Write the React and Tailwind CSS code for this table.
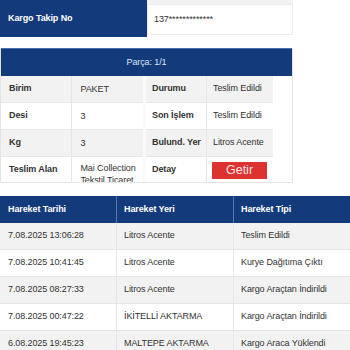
export default function App() {
  const rows = [
    ["7.08.2025 13:06:28", "Litros Acente", "Teslim Edildi"],
    ["7.08.2025 10:41:45", "Litros Acente", "Kurye Dağıtıma Çıktı"],
    ["7.08.2025 08:27:33", "Litros Acente", "Kargo Araçtan İndirildi"],
    ["7.08.2025 00:47:22", "İKİTELLİ AKTARMA", "Kargo Araçtan İndirildi"],
    ["6.08.2025 19:45:23", "MALTEPE AKTARMA", "Kargo Araca Yüklendi"],
  ];
  return (
    <div className="w-[350px] h-[350px] overflow-hidden bg-white text-[#333] text-[9px] tracking-[-0.1px]" style={{ fontFamily: '"Liberation Sans", Arial, sans-serif' }}>
      {/* Top */}
      <div className="flex h-[37px]">
        <div className="w-[147px] bg-[#133b7c] text-white font-bold flex items-center pl-[8px]">Kargo Takip No</div>
        <div className="w-[146px] flex flex-col">
          <div className="h-[4px] bg-[#f2f2f2]"></div>
          <div className="h-[31px] border border-[#ececec] bg-white flex items-center pl-[6px]">137*************</div>
        </div>
      </div>
      {/* Parca */}
      <div className="mt-[11px] w-[293px] h-[135px] overflow-hidden border border-[#e3e3e3] border-t-0">
        <div className="h-[28px] bg-[#133b7c] border-t border-[#4a6fb0] text-[#dde6f5] flex items-center justify-center">Parça: 1/1</div>
        <div className="flex">
          <div className="w-[145px] border-r-[3px] border-[#fafafa]">
            {[["Birim", "PAKET"], ["Desi", "3"], ["Kg", "3"], ["Teslim Alan", "Mai Collection Tekstil Ticaret Limited Şirketi"]].map((r, i) => (
              <div key={i} className={`flex ${i === 3 ? "h-[40px]" : "h-[27px]"} ${i % 2 === 0 ? "bg-[#f2f2f2]" : "bg-white"} border-b border-[#e6e6e6]`}>
                <div className={`w-[73px] border-r border-[#e6e6e6] font-bold pl-[8px] ${i === 3 ? "pt-[6px] leading-[12px]" : "flex items-center"}`}>{r[0]}</div>
                <div className={`w-[72px] pl-[8px] pr-[2px] leading-[12px] ${i === 3 ? "pt-[5px]" : "flex items-center"}`}>{r[1]}</div>
              </div>
            ))}
          </div>
          <div className="w-[127px]">
            {[["Durumu", "Teslim Edildi"], ["Son İşlem", "Teslim Edildi"], ["Bulund. Yer", "Litros Acente"], ["Detay", null]].map((r, i) => (
              <div key={i} className={`flex h-[27px] ${i % 2 === 0 ? "bg-[#f2f2f2]" : "bg-white"} border-b border-[#e6e6e6]`}>
                <div className="w-[61px] border-r border-[#e6e6e6] font-bold pl-[6px] flex items-center whitespace-nowrap">{r[0]}</div>
                <div className="w-[66px] pl-[6px] flex items-center whitespace-nowrap">
                  {r[1] ? r[1] : (
                    <div className="w-[55px] h-[17px] -ml-[1px] bg-[#dc3330] text-[#fbe3e2] text-[12.5px] tracking-normal flex items-center justify-center">Getir</div>
                  )}
                </div>
              </div>
            ))}
          </div>
        </div>
      </div>
      {/* Hareket */}
      <div className="mt-[13px] w-[350px]">
        <div className="grid grid-cols-[116px_117px_117px] h-[27px] bg-[#133b7c] text-white font-bold">
          <div className="pl-[8px] flex items-center">Hareket Tarihi</div>
          <div className="pl-[7px] flex items-center border-l border-[#5b78ad]">Hareket Yeri</div>
          <div className="pl-[7px] flex items-center border-l border-[#5b78ad]">Hareket Tipi</div>
        </div>
        {rows.map((r, i) => (
          <div key={i} className={`grid grid-cols-[116px_117px_117px] h-[27px] border-b border-[#e6e6e6] ${i % 2 === 0 ? "bg-[#f2f2f2]" : "bg-white"}`}>
            <div className="pl-[8px] flex items-center">{r[0]}</div>
            <div className="pl-[7px] flex items-center border-l border-[#e6e6e6]">{r[1]}</div>
            <div className="pl-[7px] flex items-center border-l border-[#e6e6e6]">{r[2]}</div>
          </div>
        ))}
      </div>
    </div>
  );
}
